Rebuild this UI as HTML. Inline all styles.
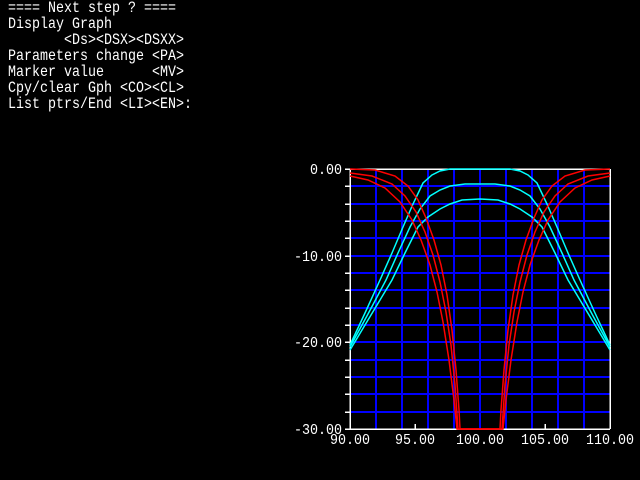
<!DOCTYPE html>
<html><head><meta charset="utf-8"><style>
html,body{margin:0;padding:0;background:#000;width:640px;height:480px;overflow:hidden}
pre{position:absolute;left:8px;top:0;margin:0;color:#fff;font-family:"Liberation Mono",monospace;font-size:16px;line-height:16px;transform:scaleX(0.8333);transform-origin:0 0}
svg{position:absolute;left:0;top:0}
svg text{font-family:"Liberation Mono",monospace;font-size:15px;fill:#fff}
</style></head><body>
<pre>==== Next step ? ====
Display Graph
       &lt;Ds&gt;&lt;DSX&gt;&lt;DSXX&gt;
Parameters change &lt;PA&gt;
Marker value      &lt;MV&gt;
Cpy/clear Gph &lt;CO&gt;&lt;CL&gt;
List ptrs/End &lt;LI&gt;&lt;EN&gt;:</pre>
<svg width="640" height="480" viewBox="0 0 640 480" shape-rendering="crispEdges">
<g stroke="#0000ff" stroke-width="2">
<line x1="376" y1="169" x2="376" y2="429"/><line x1="402" y1="169" x2="402" y2="429"/>
<line x1="428" y1="169" x2="428" y2="429"/><line x1="454" y1="169" x2="454" y2="429"/>
<line x1="480" y1="169" x2="480" y2="429"/><line x1="506" y1="169" x2="506" y2="429"/>
<line x1="532" y1="169" x2="532" y2="429"/><line x1="558" y1="169" x2="558" y2="429"/>
<line x1="584" y1="169" x2="584" y2="429"/>
<line x1="350" y1="186" x2="610" y2="186"/><line x1="350" y1="204" x2="610" y2="204"/>
<line x1="350" y1="221" x2="610" y2="221"/><line x1="350" y1="238" x2="610" y2="238"/>
<line x1="350" y1="256" x2="610" y2="256"/><line x1="350" y1="273" x2="610" y2="273"/>
<line x1="350" y1="290" x2="610" y2="290"/><line x1="350" y1="308" x2="610" y2="308"/>
<line x1="350" y1="325" x2="610" y2="325"/><line x1="350" y1="342" x2="610" y2="342"/>
<line x1="350" y1="360" x2="610" y2="360"/><line x1="350" y1="377" x2="610" y2="377"/>
<line x1="350" y1="394" x2="610" y2="394"/><line x1="350" y1="412" x2="610" y2="412"/>
</g>
<g stroke="#fff" stroke-width="1.5" fill="none">
<line x1="350" y1="169" x2="610" y2="169"/>
<line x1="350" y1="169" x2="350" y2="430"/>
<line x1="350" y1="429" x2="610" y2="429"/>
<line x1="610" y1="169" x2="610" y2="429"/>
<path d="M345 169h5M345 186h5M345 204h5M345 221h5M345 238h5M345 256h5M345 273h5M345 290h5M345 308h5M345 325h5M345 342h5M345 360h5M345 377h5M345 394h5M345 412h5M345 429h5M415 424v5M545 424v5"/>
</g>
<g fill="none" stroke-width="1.5" shape-rendering="auto">
<g stroke="#00ffff">
<polyline points="350,345 365,313 380,280 392,253 403,227 413,204 423,183 432,175 440,171 450,169 510,169 520,171 528,175 537,183 547,204 557,227 568,253 580,280 595,313 610,345"/>
<polyline points="350,347 368,314 386,280 398,253 410,227 420,209 430,196 440,190 450,186 465,184 495,184 510,186 520,190 530,196 540,209 550,227 562,253 574,280 592,314 610,347"/>
<polyline points="350,350 371,315 392,280 405,253 418,227 428,217 440,209 450,204 462,200 480,199 498,200 510,204 520,209 532,217 542,227 555,253 568,280 589,315 610,350"/>
</g>
<g stroke="#ff0000">
<polyline points="350,169 375,170 395,176 408,186 418,200 426,218 434,240 441,265 447,295 452,330 456,370 459,410 460,429 500,429 501,410 504,370 508,330 513,295 519,265 526,240 534,218 542,200 552,186 565,176 585,170 610,169"/>
<polyline points="350,173 372,176 392,184 405,196 416,212 425,232 433,255 440,282 446,312 451,345 455,385 458,429 502,429 505,385 509,345 514,312 520,282 527,255 535,232 544,212 555,196 568,184 588,176 610,173"/>
<polyline points="350,176 368,180 385,188 400,202 412,220 421,240 430,265 437,292 443,322 449,360 454,400 457,429 503,429 506,400 511,360 517,322 523,292 530,265 539,240 548,220 560,202 575,188 592,180 610,176"/>
</g>
</g>
<g text-anchor="end">
<text x="342" y="174" textLength="32" lengthAdjust="spacingAndGlyphs">0.00</text>
<text x="342" y="261" textLength="48" lengthAdjust="spacingAndGlyphs">-10.00</text>
<text x="342" y="347" textLength="48" lengthAdjust="spacingAndGlyphs">-20.00</text>
<text x="342" y="434" textLength="48" lengthAdjust="spacingAndGlyphs">-30.00</text>
</g>
<g text-anchor="middle">
<text x="350" y="444" textLength="40" lengthAdjust="spacingAndGlyphs">90.00</text>
<text x="415" y="444" textLength="40" lengthAdjust="spacingAndGlyphs">95.00</text>
<text x="480" y="444" textLength="48" lengthAdjust="spacingAndGlyphs">100.00</text>
<text x="545" y="444" textLength="48" lengthAdjust="spacingAndGlyphs">105.00</text>
<text x="610" y="444" textLength="48" lengthAdjust="spacingAndGlyphs">110.00</text>
</g>
</svg>
</body></html>
